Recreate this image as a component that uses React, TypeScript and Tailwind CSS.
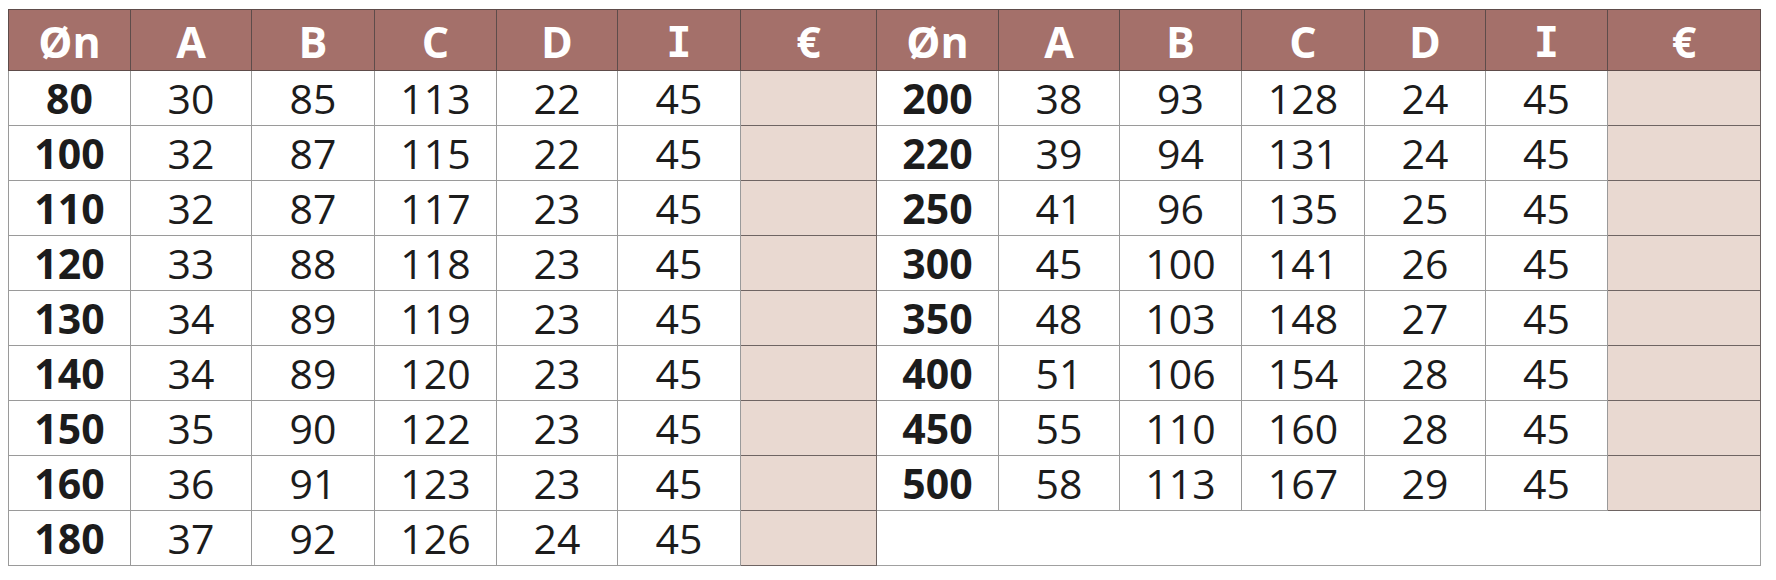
const left = [
  ["80", "30", "85", "113", "22", "45"],
  ["100", "32", "87", "115", "22", "45"],
  ["110", "32", "87", "117", "23", "45"],
  ["120", "33", "88", "118", "23", "45"],
  ["130", "34", "89", "119", "23", "45"],
  ["140", "34", "89", "120", "23", "45"],
  ["150", "35", "90", "122", "23", "45"],
  ["160", "36", "91", "123", "23", "45"],
  ["180", "37", "92", "126", "24", "45"],
];

const right = [
  ["200", "38", "93", "128", "24", "45"],
  ["220", "39", "94", "131", "24", "45"],
  ["250", "41", "96", "135", "25", "45"],
  ["300", "45", "100", "141", "26", "45"],
  ["350", "48", "103", "148", "27", "45"],
  ["400", "51", "106", "154", "28", "45"],
  ["450", "55", "110", "160", "28", "45"],
  ["500", "58", "113", "167", "29", "45"],
];

const heads = ["Øn", "A", "B", "C", "D", "I", "€"];

function Cells({ row }: { row: string[] }) {
  return (
    <>
      {row.map((v, i) => (
        <td
          key={i}
          className={
            i === 0
              ? "border border-[#9a9a9a] text-center font-bold text-[#1c1c1c]"
              : "border border-[#9a9a9a] text-center text-[#1c1c1c]"
          }
        >
          {v}
        </td>
      ))}
      <td className="border border-[#6e6462] bg-[#e9d9d1]"></td>
    </>
  );
}

export default function App() {
  return (
    <div className="w-[1776px] h-[580px] bg-white pt-[9px] pl-[8px]">
      <table
        className="border-collapse table-fixed text-[41px] leading-none border border-[#a0a0a0]"
        style={{ fontFamily: '"Open Sans", "Liberation Sans", sans-serif' }}
      >
        <colgroup>
          <col className="w-[122px]" />
          <col className="w-[121px]" />
          <col className="w-[123px]" />
          <col className="w-[122px]" />
          <col className="w-[121px]" />
          <col className="w-[123px]" />
          <col className="w-[136px]" />
          <col className="w-[122px]" />
          <col className="w-[121px]" />
          <col className="w-[122px]" />
          <col className="w-[123px]" />
          <col className="w-[121px]" />
          <col className="w-[122px]" />
          <col className="w-[153px]" />
        </colgroup>
        <thead>
          <tr className="h-[61px] bg-[#a4706a]">
            {[...heads, ...heads].map((h, i) => (
              <th
                key={i}
                className="border border-[#5e4c4a] text-center text-[43px] font-bold text-white pt-[3px]"
              >
                {h === "I" ? (
                  <span className="font-['DejaVu_Sans_Mono',monospace] text-[42px]">I</span>
                ) : (
                  h
                )}
              </th>
            ))}
          </tr>
        </thead>
        <tbody>
          {left.map((row, r) => (
            <tr key={r} className="h-[55px]">
              <Cells row={row} />
              {r < right.length ? (
                <Cells row={right[r]} />
              ) : (
                <td colSpan={7} className="border border-[#a0a0a0] bg-white"></td>
              )}
            </tr>
          ))}
        </tbody>
      </table>
    </div>
  );
}
